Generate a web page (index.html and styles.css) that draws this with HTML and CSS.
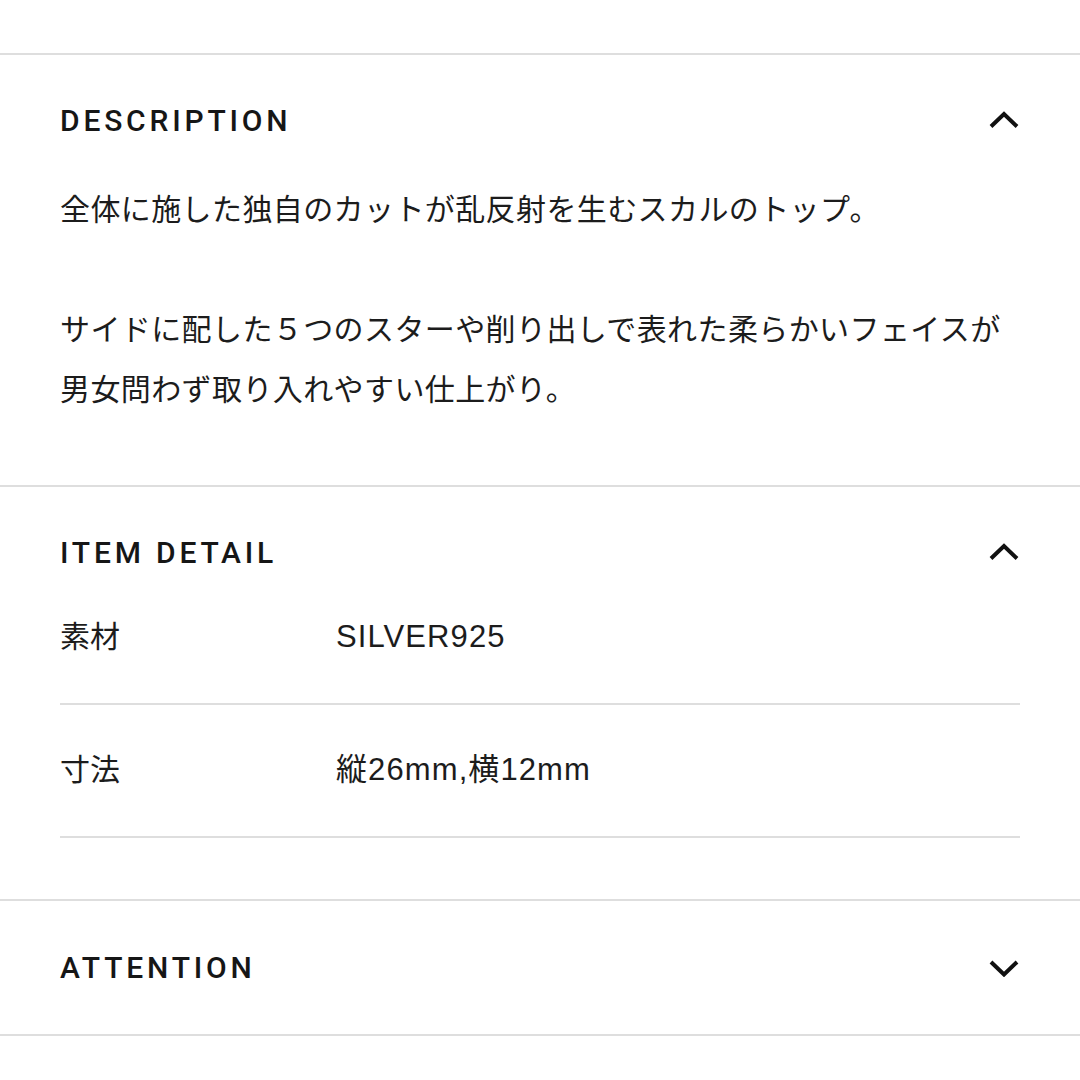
FILE: index.html
```html
<html>
<head>
    <link rel="stylesheet" href="styles.css">
</head>
<body>
    <div class="acc">
        <section class="sec sec-desc">
            <div class="head">
                <h2>DESCRIPTION</h2>
                <svg class="chev" viewBox="0 0 30 18" width="30" height="18"><polyline points="2,15.5 15,3 28,15.5"/></svg>
            </div>
            <p class="desc">全体に施した独自のカットが乱反射を生むスカルのトップ。<br><br>サイドに配した５つのスターや削り出しで表れた柔らかいフェイスが<br>男女問わず取り入れやすい仕上がり。</p>
        </section>
        <section class="sec sec-item">
            <div class="head">
                <h2>ITEM DETAIL</h2>
                <svg class="chev" viewBox="0 0 30 18" width="30" height="18"><polyline points="2,15.5 15,3 28,15.5"/></svg>
            </div>
            <div class="row">
                <span class="lbl">素材</span>
                <span class="val">SILVER925</span>
            </div>
            <div class="row">
                <span class="lbl">寸法</span>
                <span class="val">縦26mm,横12mm</span>
            </div>
        </section>
        <section class="sec sec-closed">
            <div class="head">
                <h2>ATTENTION</h2>
                <svg class="chev" viewBox="0 0 30 18" width="30" height="18"><polyline points="2,3 15,15.5 28,3"/></svg>
            </div>
        </section>
    </div>
</body>
</html>
```

FILE: styles.css
```css
body {
    margin: 0;
    padding: 0;
    background: #fff;
    color: #1c1c1c;
    font-family: "Liberation Sans", "Noto Sans CJK JP", sans-serif;
}

.acc {
    padding-top: 53px;
}

.sec {
    border-top: 2px solid #dedede;
    padding: 0 60px;
}

.sec-desc {
    padding-bottom: 65px;
}

.sec-item {
    padding-bottom: 61px;
}

.sec-closed {
    border-bottom: 2px solid #dedede;
}

.head {
    height: 130px;
    display: flex;
    align-items: center;
    justify-content: space-between;
}

.sec-closed .head {
    height: 133px;
}

.head h2 {
    margin: 0;
    font-family: Roboto, "Liberation Sans", sans-serif;
    font-weight: 500;
    font-size: 30px;
    letter-spacing: 3.8px;
    color: #161616;
}

.chev {
    margin-right: 1px;
}

.chev polyline {
    fill: none;
    stroke: #111;
    stroke-width: 4;
    stroke-linecap: butt;
    stroke-linejoin: miter;
}

.desc {
    margin: -5px 0 0;
    font-size: 30px;
    line-height: 60px;
    letter-spacing: 0.4px;
}

.row {
    display: grid;
    grid-template-columns: 276px 1fr;
    font-size: 30px;
    line-height: 40px;
    padding: 45px 0 46px;
    border-bottom: 2px solid #dedede;
}

.head + .row {
    padding-top: 0;
}

.val {
    font-size: 31px;
    letter-spacing: 1.1px;
}
```
